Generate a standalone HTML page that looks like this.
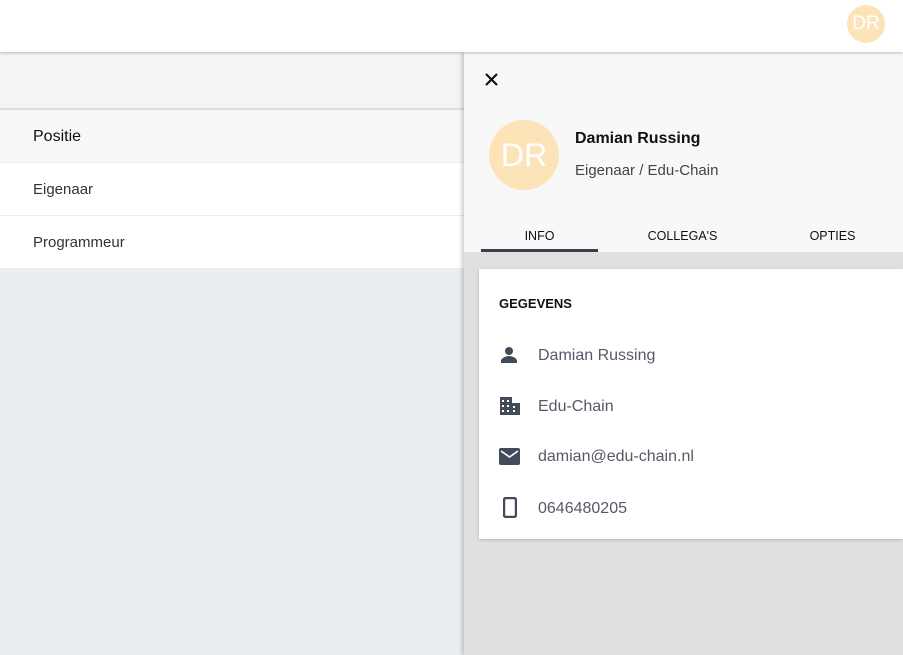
<!DOCTYPE html>
<html><head><style>
*{margin:0;padding:0;box-sizing:border-box}
body{width:903px;height:655px;overflow:hidden;position:relative;font-family:"Liberation Sans",sans-serif;background:#eaeef1}
.top{position:absolute;left:0;top:0;width:903px;height:52px;background:#fff;box-shadow:0 1px 3px rgba(0,0,0,.25);z-index:3}
.av{position:absolute;border-radius:50%;background:#fde4b8;color:#fff;display:flex;align-items:center;justify-content:center}
.l{position:absolute;left:0;width:464px}
.row{font-size:15px;color:#333;padding-left:33px;display:flex;align-items:center;border-bottom:1px solid #ececec;background:#fff}
.panel{position:absolute;left:464px;top:52px;width:439px;height:603px;background:#e0e0e0;box-shadow:-2px 0 4px rgba(0,0,0,.2);z-index:2}
.ph{position:absolute;left:0;top:0;width:439px;height:200px;background:#f8f8f8}
.tab{position:absolute;top:177px;font-size:12.5px;color:#111;text-align:center;width:117px}
.card{position:absolute;left:15px;top:217px;width:424px;height:270px;background:#fff;box-shadow:0 1px 3px rgba(0,0,0,.2)}
.it{position:absolute;left:59px;font-size:16px;color:#555a66}
.ic{position:absolute;left:20px}
</style></head><body>
<div class="top"><div class="av" style="left:847px;top:5px;width:38px;height:38px;font-size:19px">DR</div></div>
<div class="l" style="top:52px;height:58px;background:#f4f4f4;border-bottom:2px solid #ddd"></div>
<div class="l row" style="top:110px;height:53px;background:#f8f8f8;color:#111;font-size:16px;padding-top:2px">Positie</div>
<div class="l row" style="top:163px;height:53px">Eigenaar</div>
<div class="l row" style="top:216px;height:52px;border:none">Programmeur</div>
<div class="panel">
<div class="ph">
<svg style="position:absolute;left:20px;top:20px" width="15" height="15" viewBox="0 0 15 15"><path d="M2 2L13 13M13 2L2 13" stroke="#111" stroke-width="2.2"/></svg>
<div class="av" style="left:25px;top:68px;width:70px;height:70px;font-size:32px">DR</div>
<div style="position:absolute;left:111px;top:78px;font-size:16px;font-weight:bold;color:#111">Damian Russing</div>
<div style="position:absolute;left:111px;top:110px;font-size:15px;color:#444">Eigenaar / Edu-Chain</div>
<div class="tab" style="left:17px">INFO</div>
<div class="tab" style="left:160px">COLLEGA'S</div>
<div class="tab" style="left:310px">OPTIES</div>
<div style="position:absolute;left:17px;top:197px;width:117px;height:3px;background:#3a3f4b"></div>
</div>
<div class="card">
<div style="position:absolute;left:20px;top:27px;font-size:13px;font-weight:bold;color:#111">GEGEVENS</div>
<svg class="ic" style="top:77px" width="20" height="18" viewBox="0 0 20 18"><circle cx="10" cy="5" r="4" fill="#434a5a"/><path d="M2 17v-2c0-3 5-5 8-5s8 2 8 5v2z" fill="#434a5a"/></svg>
<div class="it" style="top:78px">Damian Russing</div>
<svg class="ic" style="top:128px" width="22" height="18" viewBox="0 0 22 18"><path d="M1 0h12v6h8v12H1z" fill="#434a5a"/><g fill="#fff"><rect x="3" y="3" width="2" height="2"/><rect x="8" y="3" width="2" height="2"/><rect x="3" y="8" width="2" height="2"/><rect x="8" y="8" width="2" height="2"/><rect x="3" y="13" width="2" height="2"/><rect x="8" y="13" width="2" height="2"/><rect x="14" y="9" width="2" height="2"/><rect x="14" y="13" width="2" height="2"/></g></svg>
<div class="it" style="top:129px">Edu-Chain</div>
<svg class="ic" style="top:179px" width="21" height="17" viewBox="0 0 21 17"><rect x="0" y="0" width="21" height="17" rx="2" fill="#434a5a"/><path d="M2 3l8.5 6L19 3" stroke="#fff" stroke-width="1.6" fill="none"/></svg>
<div class="it" style="top:179px">damian@edu-chain.nl</div>
<svg class="ic" style="left:24px;top:228px" width="14" height="21" viewBox="0 0 14 21"><rect x="1" y="1" width="12" height="19" rx="2" fill="none" stroke="#434a5a" stroke-width="2.4"/></svg>
<div class="it" style="top:231px">0646480205</div>
</div>
</div>
</body></html>
